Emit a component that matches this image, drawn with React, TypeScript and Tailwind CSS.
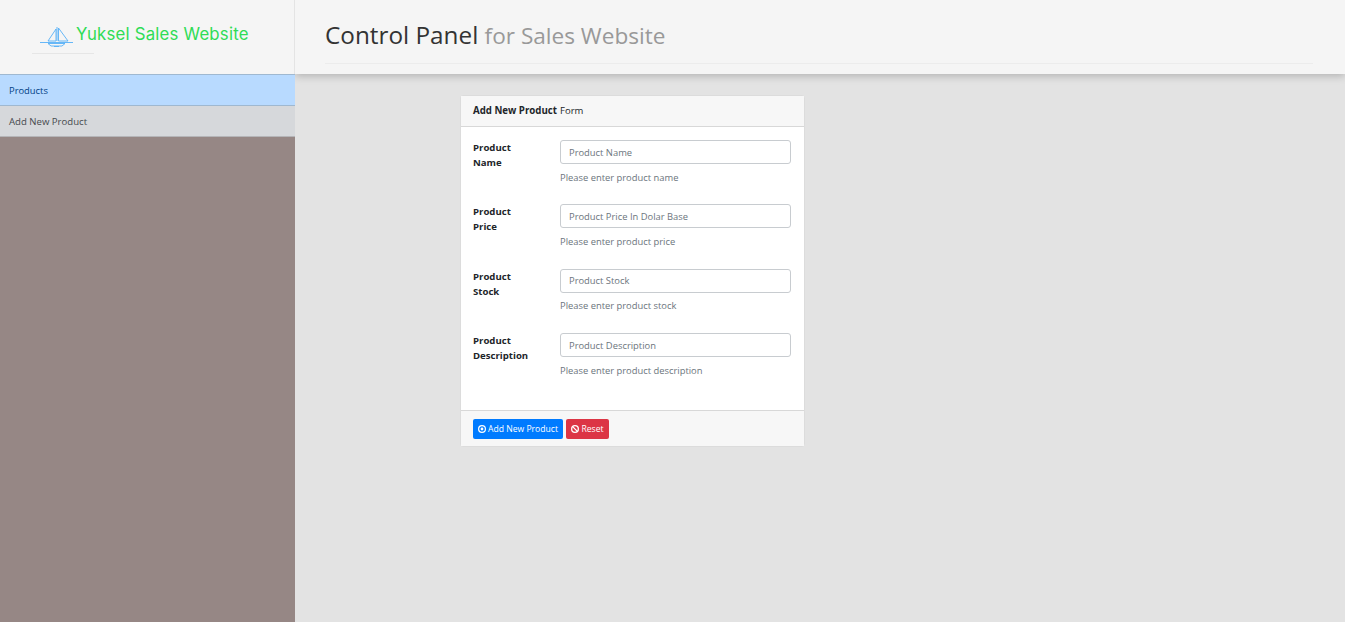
import { Ban } from 'lucide-react';

const fields = [
  { first: 'Product', second: 'Name', placeholder: 'Product Name', help: 'Please enter product name' },
  { first: 'Product', second: 'Price', placeholder: 'Product Price In Dolar Base', help: 'Please enter product price' },
  { first: 'Product', second: 'Stock', placeholder: 'Product Stock', help: 'Please enter product stock' },
  { first: 'Product', second: 'Description', placeholder: 'Product Description', help: 'Please enter product description' },
];

function Logo() {
  return (
    <svg width="34" height="24" viewBox="0 0 34 24" fill="none" stroke="#56b0f7" strokeWidth="0.9" className="shrink-0">
      <path d="M0 17.5h33" />
      <path d="M17 2v14M16 4 8 16h8zM18.5 3 28 16h-9.500z" />
      <path d="M8 18.500h17l-3 2.500H11z" />
      <path d="M14 21.500h5" />
    </svg>
  );
}

function DotCircle() {
  return (
    <svg width="8" height="8" viewBox="0 0 8 8" fill="none" className="shrink-0">
      <circle cx="4" cy="4" r="3.400" stroke="white" strokeWidth="1.200" />
      <circle cx="4" cy="4" r="1.400" fill="white" />
    </svg>
  );
}

export default function App() {
  return (
    <div className="flex h-[622px] w-[1345px] overflow-hidden bg-[#e3e3e3] font-['Open_Sans','Noto_Sans',sans-serif]">
      <aside className="z-20 flex w-[295px] shrink-0 flex-col bg-[#968785]">
        <div className="h-[74px] border-r border-[#e4e4e4] bg-[#f5f5f5] pl-[32px] pt-[25px]">
          <div className="flex items-start">
            <div className="ml-[8px]">
              <Logo />
            </div>
            <span className="ml-[2px] -mt-[1px] font-['Inter',sans-serif] text-[16.800px] leading-[20px] tracking-[0.2px] text-[#2fdc55]">
              Yuksel Sales Website
            </span>
          </div>
          <div className="mt-[4px] h-[1px] w-[62px] bg-[#e6e6e6]" />
        </div>
        <a className="flex h-[32px] items-center border-y border-[#9fb8d0] bg-[#b8daff] pl-[9px] pt-[2px] text-[9.400px] text-[#004085]">
          Products
        </a>
        <a className="flex h-[31px] items-center border-b border-[#b5b5b8] bg-[#d6d8db] pl-[9px] pt-[2px] text-[9.600px] text-[#464a4e]">
          Add New Product
        </a>
      </aside>

      <main className="flex min-w-0 flex-1 flex-col">
        <header className="z-10 h-[74px] bg-[#f5f5f5] pl-[30px] pr-[32px] pt-[18px] shadow-[0_2px_8px_rgba(0,0,0,0.22)]">
          <div className="h-[46px] border-b border-[#ececec]">
            <h1 className="text-[24.300px] leading-[34px] text-[#333333]">
              Control Panel <span className="text-[22.600px] text-[#999999]">for Sales Website</span>
            </h1>
          </div>
        </header>

        <div className="pl-[165px] pt-[21px]">
          <section className="w-[345px] rounded-[3px] border border-[#dcdcdc] bg-white text-[9.400px] text-[#212529]">
            <div className="flex h-[31px] items-center border-b border-[#d8d8d8] bg-[#f7f7f7] pl-[12px] pt-[1px]">
              <span className="text-[9.700px] font-bold">Add New Product</span>
              <span className="ml-[3px] text-[9.500px]">Form</span>
            </div>

            <form className="flex h-[283px] flex-col gap-[13px] pl-[12px] pr-[13px] pt-[13px]">
              {fields.map((f) => (
                <div key={f.placeholder} className="flex h-[51.400px]">
                  <label className="w-[87px] shrink-0 text-[9.600px] font-bold leading-[15px] text-[#212529]">
                    {f.first}
                    <br />
                    {f.second}
                  </label>
                  <div className="flex-1">
                    <input
                      placeholder={f.placeholder}
                      className="block h-[24px] w-full rounded-[3px] border border-[#c8ccd0] bg-white px-[8px] text-[9.400px] outline-none placeholder:text-[#6c757d]"
                    />
                    <p className="mt-[5.500px] text-[9.400px] leading-[15px] text-[#6c757d]">{f.help}</p>
                  </div>
                </div>
              ))}
            </form>

            <div className="flex h-[36px] items-center gap-[3px] border-t border-[#d8d8d8] bg-[#f7f7f7] pl-[12px]">
              <button className="flex h-[20px] w-[90px] items-center justify-center gap-[2px] rounded-[2px] bg-[#007bff] text-[8.600px] font-medium text-white">
                <DotCircle />
                <span className="pt-[1px]">Add New Product</span>
              </button>
              <button className="flex h-[20px] w-[43px] items-center justify-center gap-[2px] rounded-[2px] bg-[#dc3545] text-[8.600px] font-medium text-white">
                <Ban size={8} strokeWidth={4} />
                <span className="pt-[1px]">Reset</span>
              </button>
            </div>
          </section>
        </div>
      </main>
    </div>
  );
}
